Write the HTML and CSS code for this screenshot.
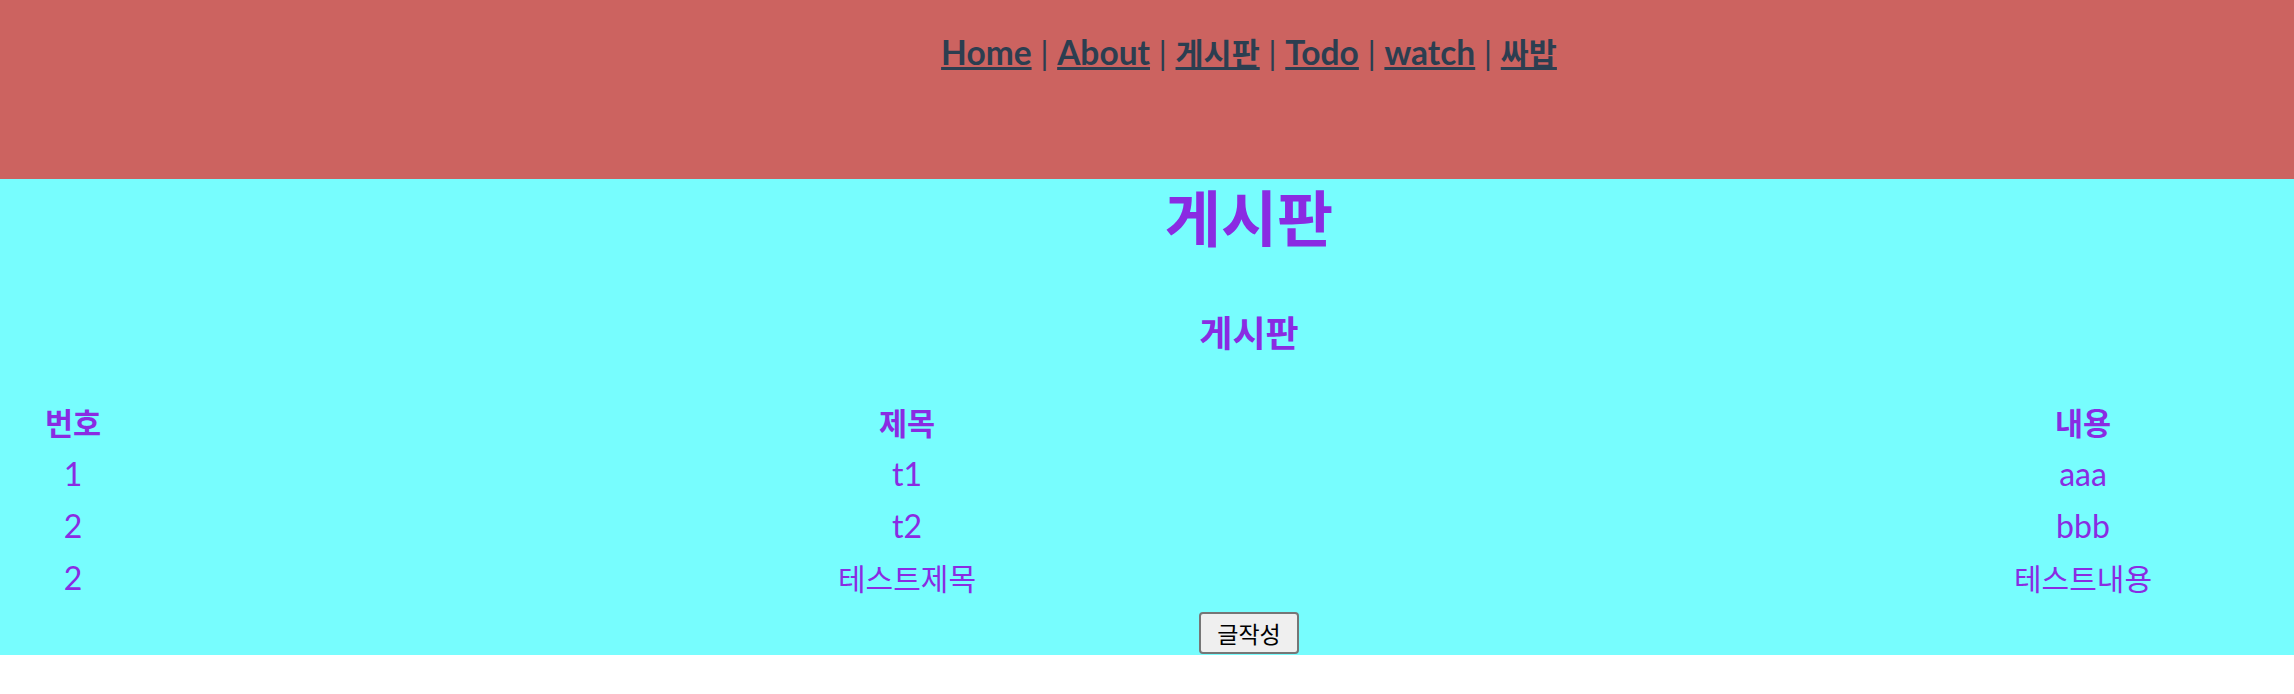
FILE: index.html
```html
<!DOCTYPE html>
<html lang="ko">
<head>
<meta charset="utf-8">
<title>게시판</title>
<link rel="stylesheet" href="styles.css">
</head>
<body>
<div class="app">
  <nav class="nav">
    <a href="#">Home</a> | <a href="#">About</a> | <a href="#" class="ko">게시판</a> | <a href="#">Todo</a> | <a href="#">watch</a> | <a href="#" class="ko">싸밥</a>
  </nav>
  <main class="board">
    <h1 class="title">게시판</h1>
    <h3 class="subtitle">게시판</h3>
    <table class="list">
      <colgroup>
        <col class="c-no">
        <col class="c-title">
        <col class="c-body">
      </colgroup>
      <thead>
        <tr><th>번호</th><th>제목</th><th>내용</th></tr>
      </thead>
      <tbody>
        <tr><td>1</td><td>t1</td><td>aaa</td></tr>
        <tr><td>2</td><td>t2</td><td>bbb</td></tr>
        <tr><td>2</td><td class="ko">테스트제목</td><td class="ko">테스트내용</td></tr>
      </tbody>
    </table>
    <div class="actions"><button class="write" type="button">글작성</button></div>
  </main>
</div>
</body>
</html>
```

FILE: styles.css
```css
html, body {
  margin: 0;
  padding: 0;
  overflow: hidden;
  background: #ffffff;
}

.app {
  width: 2498px;
  font-family: "Lato", "Noto Sans CJK KR", sans-serif;
  text-align: center;
  color: #2c3e50;
}

.nav {
  box-sizing: border-box;
  height: 179px;
  padding-top: 30px;
  background: #cc6360;
  font-size: 33.5px;
  line-height: 44px;
  color: #2c3e50;
}

.nav a {
  font-weight: 700;
  color: #2c3e50;
  text-decoration: underline;
}

.nav .ko {
  font-size: 30.5px;
}

.board {
  background: #77fdfe;
  padding-top: 7px;
  padding-bottom: 1px;
  color: #8a2be2;
}

.title {
  margin: 0;
  font-family: "Noto Sans CJK KR", sans-serif;
  font-size: 61px;
  line-height: 60px;
  font-weight: 700;
}

.subtitle {
  margin: 68px 0 0;
  font-family: "Noto Sans CJK KR", sans-serif;
  font-size: 36px;
  line-height: 34px;
  font-weight: 700;
}

.list {
  margin-top: 48px;
  width: 2498px;
  table-layout: fixed;
  border-collapse: collapse;
  border-spacing: 0;
}

.c-no { width: 146px; }
.c-title { width: 1522px; }
.c-body { width: 830px; }

.list th,
.list td {
  padding: 0;
  height: 52px;
  line-height: 52px;
  text-align: center;
  vertical-align: middle;
}

.list th {
  font-family: "Noto Sans CJK KR", sans-serif;
  font-size: 30.5px;
  font-weight: 700;
}

.list td {
  font-size: 32px;
  font-weight: 400;
}

.list td.ko {
  font-size: 30px;
}

.actions {
  display: flex;
  justify-content: center;
  padding-top: 8px;
}

.write {
  box-sizing: border-box;
  width: 100px;
  height: 42px;
  padding: 0;
  background: #efefef;
  border: 2px solid #767676;
  border-radius: 4px;
  color: #000000;
  font-family: "Noto Sans CJK KR", sans-serif;
  font-size: 23px;
  line-height: 36px;
}
```
